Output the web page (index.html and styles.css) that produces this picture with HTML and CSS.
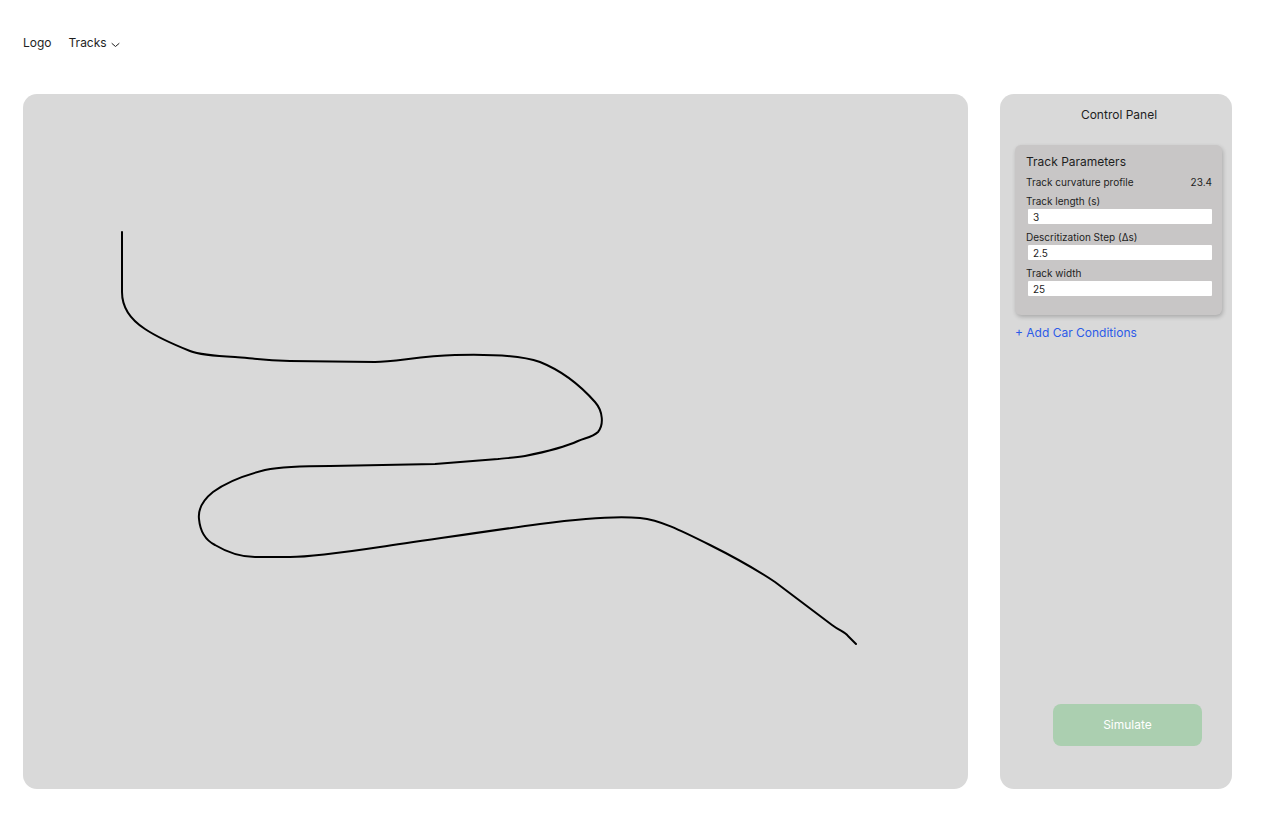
FILE: index.html
```html
<!DOCTYPE html>
<html lang="en">
<head>
<meta charset="utf-8">
<title>Track Simulator</title>
<link rel="stylesheet" href="styles.css">
</head>
<body>
<header class="nav">
  <span class="nav-item">Logo</span>
  <span class="nav-item nav-dropdown">Tracks
    <svg class="chev" width="9" height="6" viewBox="0 0 9 6"><path d="M1 1.5 L4.5 4.5 L8 1.5" fill="none" stroke="#1e1e1e" stroke-width="1" stroke-linecap="round" stroke-linejoin="round"/></svg>
  </span>
</header>
<main class="main">
  <section class="canvas">
    <svg class="track" viewBox="23 94 945 695" preserveAspectRatio="none">
      <path d="M122 232 L122 292 C122 305 128 318 145 329 C160 339 175 345 190 351 C200 355 215 356 235 357 C250 358 260 360 290 361 L375 362 C395 362 420 356 455 355 C490 354 520 355 540 362 C560 370 580 385 595 402 C603 411 604 425 598 432 C593 437 585 438 578 441 C565 447 545 452 525 456 C515 458 505 458 498 459 L435 464 L330 466 C300 466 280 467 265 470 C245 475 225 483 213 492 C203 500 198 510 199 519 C200 530 205 540 215 545 C225 551 240 557 255 557 L290 557 C310 557 340 553 380 547 C430 540 480 532 540 524 C585 518 620 516 640 518 C660 520 680 530 710 545 C740 560 760 572 775 582 L832 625 C840 631 845 632 848 636 L856 644" fill="none" stroke="#000" stroke-width="2" stroke-linecap="round" stroke-linejoin="round"/>
    </svg>
  </section>
  <aside class="panel">
    <h2 class="panel-title">Control Panel</h2>
    <div class="card">
      <h3 class="card-title">Track Parameters</h3>
      <div class="row">
        <span class="label">Track curvature profile</span>
        <span class="label">23.4</span>
      </div>
      <label class="field">
        <span class="label">Track length (s)</span>
        <span class="input">3</span>
      </label>
      <label class="field">
        <span class="label">Descritization Step (Δs)</span>
        <span class="input">2.5</span>
      </label>
      <label class="field">
        <span class="label">Track width</span>
        <span class="input">25</span>
      </label>
    </div>
    <a class="add-link">+ Add Car Conditions</a>
    <button class="simulate">Simulate</button>
  </aside>
</main>
</body>
</html>
```
FILE: styles.css
```css
* { box-sizing: border-box; }
html, body { margin: 0; padding: 0; background: #fff; }
body {
  font-family: Inter, "Noto Sans", sans-serif;
  color: #1e1e1e;
  width: 1280px;
  height: 832px;
  padding: 0 23px;
}
.nav {
  display: flex;
  align-items: center;
  gap: 17px;
  height: 86px;
  font-size: 12px;
  line-height: 16px;
}
.nav-item { display: inline-flex; align-items: center; }
.chev { margin-left: 4px; margin-top: 3px; }
.main {
  display: flex;
  gap: 32px;
  margin-top: 8px;
  height: 695px;
}
.canvas {
  width: 945px;
  height: 695px;
  background: #d9d9d9;
  border-radius: 14px;
  overflow: hidden;
}
.track { display: block; width: 100%; height: 100%; }
.panel {
  width: 232px;
  height: 695px;
  background: #d9d9d9;
  border-radius: 14px;
  display: flex;
  flex-direction: column;
  padding: 13px 10px 43px 15px;
}
.panel-title {
  margin: 0;
  font-size: 12px;
  font-weight: 400;
  line-height: 16px;
  text-align: center;
  padding-left: 1px;
}
.card {
  margin-top: 22px;
  background: #c8c6c6;
  border-radius: 6px;
  box-shadow: 1px 2px 4px rgba(0,0,0,0.22);
  padding: 9px 10px 19px 11px;
  display: flex;
  flex-direction: column;
}
.card-title {
  margin: 0;
  font-size: 12px;
  font-weight: 400;
  line-height: 16px;
}
.row {
  display: flex;
  justify-content: space-between;
  margin-top: 6px;
}
.label {
  font-size: 10px;
  line-height: 12px;
}
.field {
  display: flex;
  flex-direction: column;
  margin-top: 7px;
}
.input {
  margin-top: 2px;
  margin-left: 2px;
  height: 15px;
  background: #fff;
  border-radius: 1px;
  font-size: 10px;
  line-height: 15px;
  padding-top: 1px;
  padding-left: 5px;
}
.add-link {
  margin-top: 10px;
  font-size: 12px;
  line-height: 16px;
  color: #2c5be8;
}
.simulate {
  margin-top: auto;
  margin-left: 38px;
  width: 149px;
  height: 42px;
  border: none;
  border-radius: 8px;
  background: #abcfb0;
  color: #fff;
  font-family: Inter, "Noto Sans", sans-serif;
  font-size: 12px;
  padding: 0 0 2px;
}
```
